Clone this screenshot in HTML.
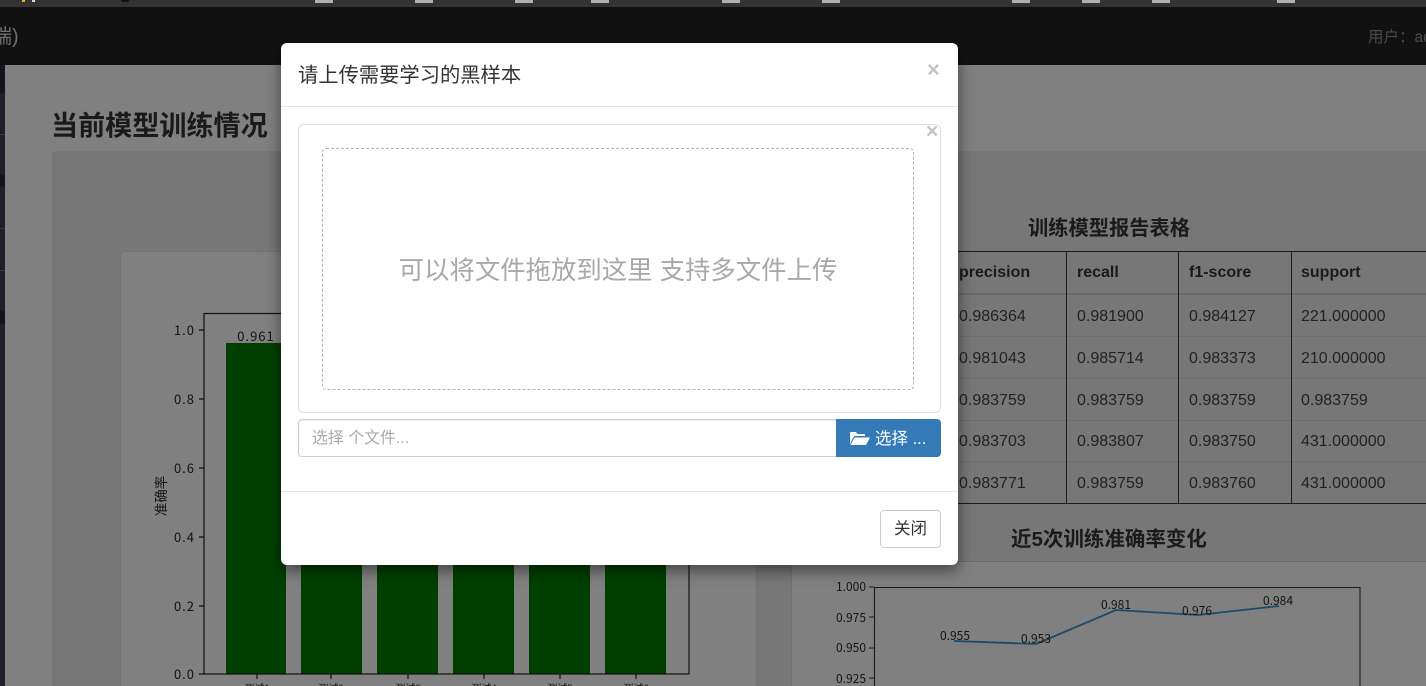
<!DOCTYPE html>
<html lang="zh">
<head>
<meta charset="utf-8">
<title>模型训练情况</title>
<style>
*{box-sizing:border-box}
html,body{margin:0;padding:0;width:1426px;height:686px;overflow:hidden;background:#808080;font-family:"Liberation Sans","Noto Sans CJK SC",sans-serif;color:#333}
#w{position:relative;width:1426px;height:686px;overflow:hidden;background:#808080}
.a{position:absolute}
.top{left:0;top:0;width:1426px;height:7px;background:#333}
.tk{top:0;width:18px;height:3px;background:#b0b0b0}
.nav{left:0;top:7px;width:1426px;height:58px;background:#111}
.strip{left:0;top:65px;width:5px;height:621px;background:#1c1f29}
.sep{left:0;width:5px;background:#14151b}
.panel{left:52px;top:151px;width:1374px;height:535px;background:#777;border-radius:4px 0 0 0}
.card{background:#808080;border:1px solid #727272;border-bottom:0;border-radius:4px 4px 0 0}
.h{font-weight:bold;color:#1a1a1a;white-space:nowrap}
.ln{background:#1c1c1c}
.rl{left:948px;width:478px;height:1px;background:#6e6e6e}
.c{font-size:16px;color:#222;white-space:nowrap;line-height:20px}
.th{font-weight:bold;color:#1a1a1a}
.modal{left:281px;top:43px;width:677px;height:522px;background:#fff;border-radius:6px;box-shadow:0 5px 15px rgba(0,0,0,.5)}
.x{font-weight:bold;color:#c4c4c4;font-family:"Liberation Sans",sans-serif;line-height:20px}
</style>
</head>
<body>
<div id="w">
<div class="a top"></div>
<div class="a" style="left:22px;top:0;width:3px;height:2px;background:#e8b030"></div>
<div class="a" style="left:32px;top:0;width:3px;height:2px;background:#ddd"></div>
<div class="a" style="left:121px;top:0;width:8px;height:2px;background:#111;border-radius:0 0 4px 4px"></div>
<div class="a tk" style="left:315px"></div><div class="a tk" style="left:415px"></div><div class="a tk" style="left:515px"></div><div class="a tk" style="left:591px"></div><div class="a tk" style="left:722px"></div><div class="a tk" style="left:822px"></div><div class="a tk" style="left:1012px"></div><div class="a tk" style="left:1082px"></div><div class="a tk" style="left:1152px"></div><div class="a tk" style="left:1277px"></div>
<div class="a nav"></div>
<div class="a" style="left:-8px;top:24px;font-size:20px;line-height:26px;color:#707070;white-space:nowrap">端)</div>
<div class="a" style="left:1368px;top:28px;width:58px;overflow:hidden;font-size:15.5px;line-height:20px;color:#4a4a4a;white-space:nowrap">用户：admin</div>
<div class="a strip"></div>
<div class="a sep" style="top:65px;height:28px"></div>
<div class="a sep" style="top:134px;height:1px;background:#3a3a3a"></div>
<div class="a sep" style="top:175px;height:12px"></div>
<div class="a sep" style="top:228px;height:1px;background:#3a3a3a"></div>
<div class="a sep" style="top:270px;height:1px;background:#3a3a3a"></div>
<div class="a sep" style="top:311px;height:13px"></div>

<div class="a h" style="left:51px;top:107px;font-size:27.1px;line-height:38px">当前模型训练情况</div>
<div class="a panel"></div>
<div class="a card" style="left:120px;top:251px;width:637px;height:435px"></div>
<div class="a card" style="left:791px;top:561px;width:635px;height:125px;border-right:0;border-radius:0;border-top-color:#6c6c6c"></div>

<svg class="a" style="left:120px;top:251px;overflow:hidden" width="640" height="435" viewBox="120 251 640 435" font-family="'WenQuanYi Zen Hei','Noto Sans CJK SC',sans-serif" font-size="13" fill="#141414">
<g fill="#003f00">
<rect x="226" y="343" width="60" height="331"/><rect x="301" y="343" width="61" height="331"/><rect x="377" y="343" width="61" height="331"/><rect x="453" y="343" width="61" height="331"/><rect x="529" y="343" width="61" height="331"/><rect x="605" y="343" width="61" height="331"/>
</g>
<rect x="204" y="313.500" width="485" height="360.500" fill="none" stroke="#111" stroke-width="1.2"/>
<g stroke="#111" stroke-width="1.2">
<path d="M199 330h5M199 399h5M199 468h5M199 537h5M199 606h5M199 674h5"/>
<path d="M257 674v5M331 674v5M408 674v5M484 674v5M560 674v5M636 674v5"/>
</g>
<g text-anchor="end" letter-spacing="1">
<text x="195" y="335">1.0</text><text x="195" y="404">0.8</text><text x="195" y="473">0.6</text><text x="195" y="542">0.4</text><text x="195" y="611">0.2</text><text x="195" y="679">0.0</text>
</g>
<text x="256" y="341" text-anchor="middle" letter-spacing="1">0.961</text>
<text transform="translate(166,496) rotate(-90)" text-anchor="middle" font-size="13.5">准确率</text>
<g text-anchor="middle" font-size="10">
<text x="257" y="692">测试1</text><text x="331" y="692">测试2</text><text x="408" y="692">测试3</text><text x="484" y="692">测试4</text><text x="560" y="692">测试5</text><text x="636" y="692">测试6</text>
</g>
</svg>

<div class="a h" style="left:1028px;top:215px;font-size:20.25px;line-height:28px">训练模型报告表格</div>

<div class="a ln" style="left:948px;top:251px;width:478px;height:1px"></div>
<div class="a" style="left:948px;top:293px;width:478px;height:2px;background:#6a6a6a"></div>
<div class="a rl" style="top:336px"></div><div class="a rl" style="top:378px"></div><div class="a rl" style="top:420px"></div><div class="a rl" style="top:461px"></div>
<div class="a ln" style="left:948px;top:503px;width:478px;height:1px"></div>
<div class="a ln" style="left:1066px;top:251px;width:1px;height:253px"></div>
<div class="a ln" style="left:1178px;top:251px;width:1px;height:253px"></div>
<div class="a ln" style="left:1291px;top:251px;width:1px;height:253px"></div>

<div class="a c th" style="left:959px;top:263px">precision</div><div class="a c th" style="left:1077px;top:263px">recall</div><div class="a c th" style="left:1189px;top:263px">f1-score</div><div class="a c th" style="left:1301px;top:263px">support</div>
<div class="a c" style="left:959px;top:307px">0.986364</div><div class="a c" style="left:1077px;top:307px">0.981900</div><div class="a c" style="left:1189px;top:307px">0.984127</div><div class="a c" style="left:1301px;top:307px">221.000000</div>
<div class="a c" style="left:959px;top:349px">0.981043</div><div class="a c" style="left:1077px;top:349px">0.985714</div><div class="a c" style="left:1189px;top:349px">0.983373</div><div class="a c" style="left:1301px;top:349px">210.000000</div>
<div class="a c" style="left:959px;top:391px">0.983759</div><div class="a c" style="left:1077px;top:391px">0.983759</div><div class="a c" style="left:1189px;top:391px">0.983759</div><div class="a c" style="left:1301px;top:391px">0.983759</div>
<div class="a c" style="left:959px;top:432px">0.983703</div><div class="a c" style="left:1077px;top:432px">0.983807</div><div class="a c" style="left:1189px;top:432px">0.983750</div><div class="a c" style="left:1301px;top:432px">431.000000</div>
<div class="a c" style="left:959px;top:474px">0.983771</div><div class="a c" style="left:1077px;top:474px">0.983759</div><div class="a c" style="left:1189px;top:474px">0.983760</div><div class="a c" style="left:1301px;top:474px">431.000000</div>

<div class="a h" style="left:1011px;top:526px;font-size:20.5px;line-height:28px">近5次训练准确率变化</div>

<svg class="a" style="left:791px;top:570px;overflow:hidden" width="635" height="116" viewBox="791 570 635 116" font-family="'WenQuanYi Zen Hei','Noto Sans CJK SC',sans-serif" font-size="12" fill="#141414">
<path d="M874.500 686V587.500H1360V686" fill="none" stroke="#1a1a1a" stroke-width="1.1"/>
<path d="M869 587h5M869 617h5M869 648h5M869 678h5" stroke="#1a1a1a"/>
<g text-anchor="end">
<text x="866" y="591">1.000</text><text x="866" y="622">0.975</text><text x="866" y="652">0.950</text><text x="866" y="683">0.925</text>
</g>
<polyline points="954,641 1036,644 1116,610 1198,615 1279,606" fill="none" stroke="#1d4a68" stroke-width="1.8"/>
<g text-anchor="middle">
<text x="955" y="640">0.955</text><text x="1036" y="643">0.953</text><text x="1116" y="609">0.981</text><text x="1197" y="615">0.976</text><text x="1278" y="605">0.984</text>
</g>
</svg>

<div class="a modal"></div>
<div class="a" style="left:298px;top:62px;font-size:20.3px;line-height:28px;color:#333;white-space:nowrap">请上传需要学习的黑样本</div>
<div class="a x" style="left:927px;top:60px;font-size:22px">×</div>
<div class="a" style="left:281px;top:106px;width:677px;height:1px;background:#e5e5e5"></div>

<div class="a" style="left:298px;top:124px;width:643px;height:289px;border:1px solid #ddd;border-radius:6px"></div>
<div class="a x" style="left:926px;top:122px;font-size:21px">×</div>
<div class="a" style="left:322px;top:148px;width:592px;height:242px;border:1px dashed #b4b4b4;border-radius:4px"></div>
<div class="a" style="left:322px;top:252px;width:592px;text-align:center;font-size:25.4px;line-height:38px;color:#a8a8a8;white-space:nowrap">可以将文件拖放到这里 支持多文件上传</div>

<div class="a" style="left:298px;top:419px;width:539px;height:38px;border:1px solid #ccc;border-right:0;border-radius:4px 0 0 4px;box-shadow:inset 0 1px 1px rgba(0,0,0,.075)"></div>
<div class="a" style="left:312px;top:429px;font-size:15.9px;line-height:20px;color:#a9a9a9;white-space:nowrap">选择 个文件...</div>
<div class="a" style="left:836px;top:419px;width:105px;height:38px;background:#337ab7;border-radius:0 4px 4px 0"></div>
<svg class="a" style="left:849px;top:430px" width="22" height="16" viewBox="0 0 22 16"><path d="M1 14V3q0-1 1-1h5l1.500 2H15q1 0 1 1v1H6q-1 0-1.500 1z" fill="#fff"/><path d="M1.500 15 5.500 7.500h15.500L17 15z" fill="#fff"/></svg>
<div class="a" style="left:875px;top:429px;font-size:16.5px;line-height:20px;color:#fff;white-space:nowrap">选择 ...</div>

<div class="a" style="left:281px;top:491px;width:677px;height:1px;background:#e5e5e5"></div>
<div class="a" style="left:880px;top:510px;width:61px;height:38px;border:1px solid #ccc;border-radius:4px;background:#fff;text-align:center;font-size:16.5px;line-height:36px;color:#333">关闭</div>
</div>
</body>
</html>
